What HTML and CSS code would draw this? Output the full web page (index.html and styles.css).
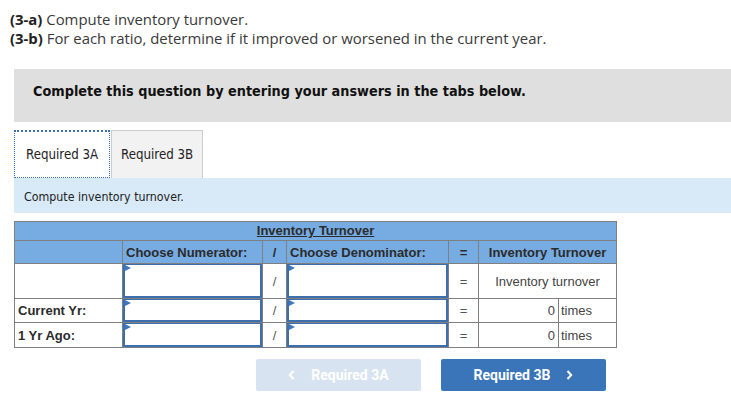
FILE: index.html
```html
<!DOCTYPE html>
<html>
<head>
<meta charset="utf-8">
<link rel="stylesheet" href="styles.css">
</head>
<body>
<div class="intro">
  <div class="line"><b>(3-a)</b> Compute inventory turnover.</div>
  <div class="line"><b>(3-b)</b> For each ratio, determine if it improved or worsened in the current year.</div>
</div>
<div class="notice">Complete this question by entering your answers in the tabs below.</div>
<div class="tabs">
  <div class="tab active">Required 3A</div>
  <div class="tab">Required 3B</div>
</div>
<div class="instr">Compute inventory turnover.</div>
<table class="grid">
  <colgroup>
    <col class="c-label"><col class="c-num"><col class="c-slash"><col class="c-den"><col class="c-eq"><col class="c-val"><col class="c-unit">
  </colgroup>
  <tr class="r-title"><th colspan="7"><span class="title">Inventory Turnover</span></th></tr>
  <tr class="r-head">
    <th></th>
    <th class="left">Choose Numerator:</th>
    <th>/</th>
    <th class="left">Choose Denominator:</th>
    <th>=</th>
    <th colspan="2">Inventory Turnover</th>
  </tr>
  <tr class="r-first">
    <td></td>
    <td class="in"><div class="field"></div></td>
    <td class="op">/</td>
    <td class="in"><div class="field"></div></td>
    <td class="op">=</td>
    <td colspan="2" class="center">Inventory turnover</td>
  </tr>
  <tr class="r-row">
    <td class="label">Current Yr:</td>
    <td class="in"><div class="field"></div></td>
    <td class="op">/</td>
    <td class="in"><div class="field"></div></td>
    <td class="op">=</td>
    <td class="num">0</td>
    <td class="unit">times</td>
  </tr>
  <tr class="r-row r-last">
    <td class="label">1 Yr Ago:</td>
    <td class="in"><div class="field"></div></td>
    <td class="op">/</td>
    <td class="in"><div class="field"></div></td>
    <td class="op">=</td>
    <td class="num">0</td>
    <td class="unit">times</td>
  </tr>
</table>
<div class="nav">
  <button class="btn prev"><svg class="chev" width="7" height="10" viewBox="0 0 7 10"><polyline points="5.5,1 1.8,5 5.5,9" fill="none" stroke="#fff" stroke-width="2"/></svg>Required 3A</button>
  <button class="btn next">Required 3B<svg class="chev" width="7" height="10" viewBox="0 0 7 10"><polyline points="1.5,1 5.2,5 1.5,9" fill="none" stroke="#fff" stroke-width="2"/></svg></button>
</div>
</body>
</html>
```
FILE: styles.css
```css
html, body {
  margin: 0;
  padding: 0;
  background: #fff;
}
body {
  width: 731px;
  height: 393px;
  overflow: hidden;
}
.intro {
  padding: 10px 0 0 10px;
  font-family: "Open Sans", "Liberation Sans", sans-serif;
  font-size: 14.9px;
  color: #3a3a3a;
  line-height: 19px;
  height: 59px;
}
.intro b {
  font-weight: 700;
  color: #222;
}
.notice {
  margin-left: 14px;
  height: 53px;
  box-sizing: border-box;
  background: #dfdfdf;
  padding: 14px 0 0 19px;
  font-family: "DejaVu Sans Condensed", "DejaVu Sans", sans-serif;
  font-weight: bold;
  font-size: 14.3px;
  line-height: 16px;
  color: #111;
}
.tabs {
  display: flex;
  margin: 8px 0 0 14px;
  height: 48px;
  font-family: "DejaVu Sans Condensed", "DejaVu Sans", sans-serif;
  font-size: 13.2px;
  color: #222;
}
.tab {
  display: flex;
  align-items: center;
  white-space: nowrap;
  padding: 0 0 0 9px;
  background: #f2f2f2;
  border: 1px solid #ccc;
  border-bottom: none;
  margin-left: 1px;
  box-sizing: border-box;
  width: 92px;
}
.tab.active {
  background: #fff;
  border: 1px dotted #3a6fb5;
  border-width: 2px 1px 1px 1px;
  width: 96px;
  padding: 0 0 0 11px;
  margin-left: 0;
}
.instr {
  margin-left: 14px;
  height: 35px;
  box-sizing: border-box;
  background: #d8eaf8;
  display: flex;
  align-items: center;
  padding: 2px 0 0 10px;
  font-family: "DejaVu Sans Condensed", "DejaVu Sans", sans-serif;
  font-size: 12.3px;
  color: #222;
}
.grid {
  margin: 8px 0 0 14px;
  border-collapse: collapse;
  table-layout: fixed;
  width: 603px;
  font-family: "Liberation Sans", Arial, sans-serif;
  font-size: 13px;
  color: #333;
}
.c-label { width: 108px; }
.c-num { width: 140px; }
.c-slash { width: 24px; }
.c-den { width: 162px; }
.c-eq { width: 30px; }
.c-val { width: 80px; }
.c-unit { width: 58px; }
.grid th, .grid td {
  border: 1px solid #7f7f7f;
  padding: 0;
}
.grid th {
  background: #77ace2;
  font-weight: bold;
  color: #2b2b2b;
  text-align: center;
}
.grid th.left {
  text-align: left;
  padding-left: 3px;
}
.r-title th {
  height: 18px;
  line-height: 16px;
}
.title {
  text-decoration: underline;
}
.r-head th { height: 22px; }
.r-first td { height: 34px; }
.r-row td { height: 23px; }
.r-last td { height: 24px; }
.grid td.op {
  text-align: center;
  color: #555;
}
.grid td.center {
  text-align: center;
  color: #444;
}
.grid td.label {
  font-weight: bold;
  color: #2b2b2b;
  padding-left: 3px;
}
.grid td.num {
  text-align: right;
  padding-right: 3px;
  color: #444;
}
.grid td.unit {
  padding-left: 2px;
  color: #444;
}
.grid td.in {
  position: relative;
}
.field {
  position: absolute;
  inset: 0 0 0 0;
  border: 2px solid #3d6fae;
  border-top-width: 1px;
  background: #fff;
}
.field::before {
  content: "";
  position: absolute;
  top: 0;
  left: 0;
  border-style: solid;
  border-width: 3px 0 3px 6px;
  border-color: transparent transparent transparent #3d77bd;
}
.nav {
  display: flex;
  gap: 20px;
  margin: 11px 0 0 256px;
}
.btn {
  width: 165px;
  height: 32px;
  border: none;
  border-radius: 2px;
  font-family: "Roboto", "Liberation Sans", Arial, sans-serif;
  font-weight: bold;
  font-size: 14px;
  color: #fff;
  padding: 0;
  display: flex;
  align-items: center;
  justify-content: center;
}
.btn.prev {
  background: #d7e3f1;
}
.btn.next {
  background: #3a75ba;
}
.next .chev { margin-left: 16px; }
.prev .chev { margin-right: 16px; }
```
